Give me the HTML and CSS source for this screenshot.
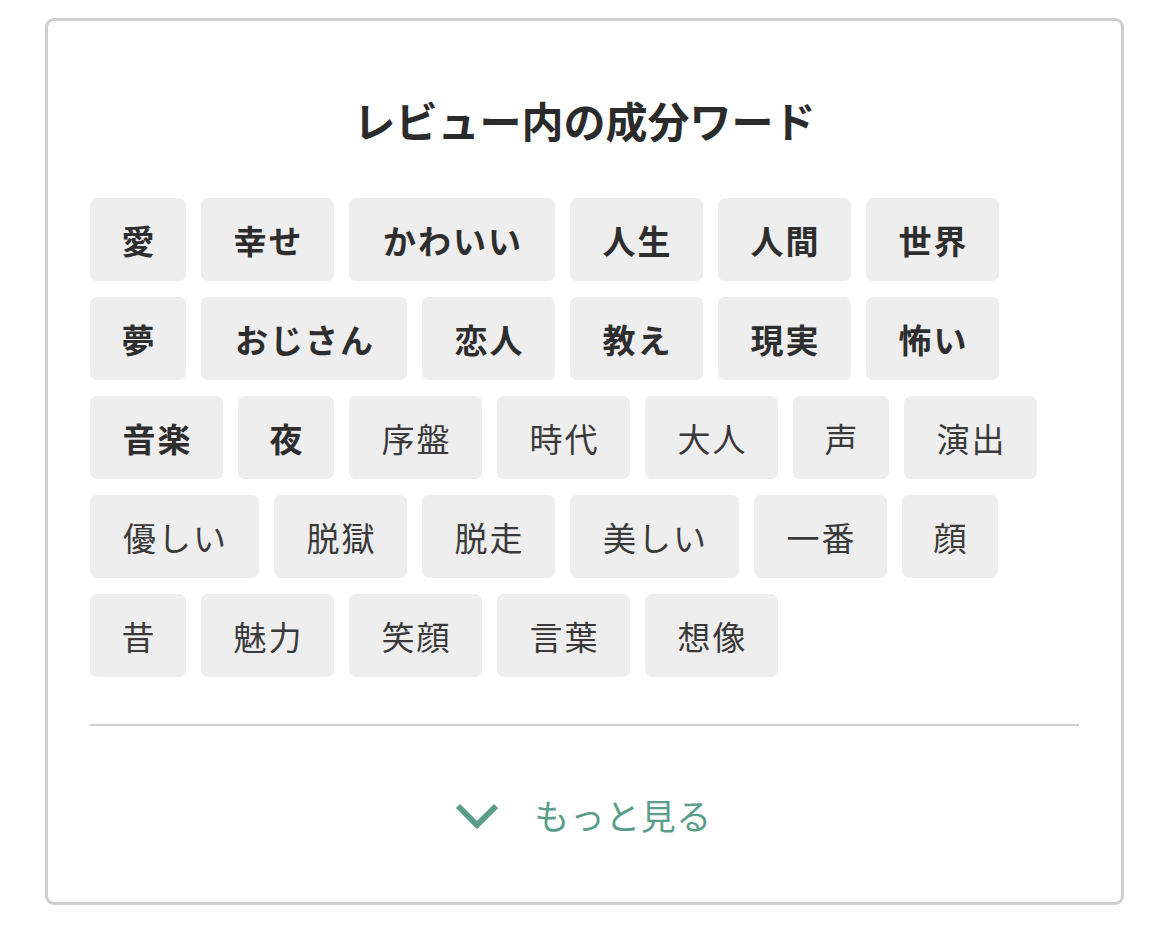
FILE: index.html
```html
<!DOCTYPE html>
<html lang="ja">
<head>
  <meta charset="UTF-8" />
  <meta name="viewport" content="width=device-width, initial-scale=1.0"/>
  <title>レビュー内の成分ワード</title>
  <link rel="stylesheet" href="styles.css">
</head>
<body>
  <section class="card">
    <h2 class="card-title">レビュー内の成分ワード</h2>

    <ul class="words">
      <li class="word strong w1">愛</li>
      <li class="word strong w2">幸せ</li>
      <li class="word strong w4">かわいい</li>
      <li class="word strong w2">人生</li>
      <li class="word strong w2">人間</li>
      <li class="word strong w2">世界</li>
      <li class="word strong w1">夢</li>
      <li class="word strong w4">おじさん</li>
      <li class="word strong w2">恋人</li>
      <li class="word strong w2">教え</li>
      <li class="word strong w2">現実</li>
      <li class="word strong w2">怖い</li>
      <li class="word strong w2">音楽</li>
      <li class="word strong w1">夜</li>
      <li class="word w2">序盤</li>
      <li class="word w2">時代</li>
      <li class="word w2">大人</li>
      <li class="word w1">声</li>
      <li class="word w2">演出</li>
      <li class="word w3">優しい</li>
      <li class="word w2">脱獄</li>
      <li class="word w2">脱走</li>
      <li class="word w3">美しい</li>
      <li class="word w2">一番</li>
      <li class="word w1">顔</li>
      <li class="word w1">昔</li>
      <li class="word w2">魅力</li>
      <li class="word w2">笑顔</li>
      <li class="word w2">言葉</li>
      <li class="word w2">想像</li>
    </ul>

    <a class="more" href="#">
      <svg class="more-icon" width="44" height="26" viewBox="0 0 44 26">
        <polyline points="3,3 22,22 41,3" fill="none" stroke="currentColor" stroke-width="6" />
      </svg>
      <span>もっと見る</span>
    </a>
  </section>
</body>
</html>
```

FILE: styles.css
```css
body {
  margin: 0;
  padding: 18px 0 0 45px;
  background: #fff;
  font-family: "Noto Sans CJK JP", "Noto Sans", sans-serif;
  color: #333;
}

.card {
  box-sizing: border-box;
  width: 1079px;
  height: 887px;
  border: 3px solid #cfcfcf;
  border-radius: 9px;
  padding: 75px 42px 0 42px;
}

.card-title {
  margin: 0 0 54px;
  font-size: 42px;
  line-height: 48px;
  font-weight: bold;
  text-align: center;
  color: #2b2b2b;
}

.words {
  list-style: none;
  margin: 0;
  padding: 0;
  display: flex;
  flex-wrap: wrap;
  gap: 16px 15px;
}

.word {
  display: flex;
  align-items: center;
  justify-content: center;
  height: 83px;
  background: #eeeeee;
  border-radius: 7px;
  font-size: 33px;
  letter-spacing: 2px;
  text-indent: 2px;
  color: #3a3a3a;
}

.word.strong {
  font-weight: bold;
  color: #2e2e2e;
}

.w1 { width: 96px; }
.w2 { width: 133px; }
.w3 { width: 169px; }
.w4 { width: 206px; }

.more {
  display: flex;
  align-items: center;
  justify-content: center;
  gap: 35px;
  height: 177px;
  margin-top: 47px;
  border-top: 2px solid #cfcfcf;
  color: #5a9e8a;
  text-decoration: none;
  font-size: 35px;
  letter-spacing: 0.5px;
}

.more-icon {
  display: block;
  margin-left: -2px;
  margin-top: 2px;
}
```
